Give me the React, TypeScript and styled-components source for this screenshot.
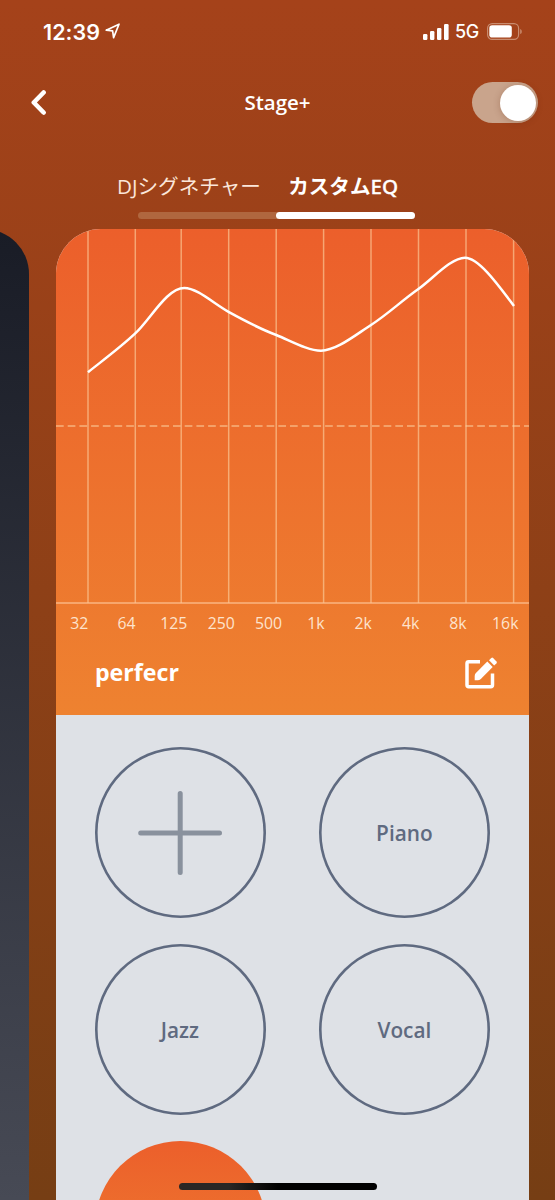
import React from 'react';
import styled, { createGlobalStyle } from 'styled-components';

const GlobalStyle = createGlobalStyle`
  * { box-sizing: border-box; }
  body { margin: 0; }
`;

const Screen = styled.div`
  position: relative;
  width: 555px;
  height: 1200px;
  overflow: hidden;
  display: flex;
  flex-direction: column;
  background: linear-gradient(#a5421a, #763e14);
  color: #fff;
  font-family: 'Open Sans', 'Noto Sans CJK JP', sans-serif;
`;

const StatusBar = styled.header`
  flex: none;
  height: 63px;
  padding: 0 32px 0 43px;
  display: flex;
  align-items: center;
  font-family: Inter, sans-serif;
`;

const Clock = styled.span`
  font-size: 21.5px;
  font-weight: 600;
  letter-spacing: 0.05px;
  width: 57px;
  white-space: nowrap;
`;

const LocationIcon = styled.svg`
  margin: 0 auto 1px 5px;
`;

const Network = styled.span`
  font-size: 18px;
  font-weight: 500;
  width: 24px;
  margin: 0 8px 0 6px;
  letter-spacing: -0.3px;
  white-space: nowrap;
`;

const Header = styled.div`
  flex: none;
  height: 79px;
  padding: 0 17px 0 30px;
  display: grid;
  grid-template-columns: 66px 1fr 66px;
  align-items: center;
`;

const BackButton = styled.button`
  border: 0;
  padding: 0;
  background: none;
  display: flex;
`;

const Title = styled.h1`
  margin: 0;
  padding: 0 13px 2px 0;
  text-align: center;
  font-size: 20.5px;
  font-weight: 600;
  line-height: 28px;
`;

const Toggle = styled.button`
  width: 66px;
  height: 41px;
  border: 0;
  border-radius: 21px;
  padding: 0 2px 0 0;
  display: flex;
  justify-content: flex-end;
  align-items: center;
  background: #c9a48c;
`;

const Knob = styled.span`
  width: 36px;
  height: 36px;
  border-radius: 50%;
  background: #fff;
  box-shadow: 0 1px 7px rgba(90, 30, 0, 0.25);
`;

const Tabs = styled.nav`
  flex: none;
  height: 87px;
  padding: 25px 0 0 117px;
`;

const TabLabels = styled.div`
  display: flex;
  height: 45px;
  padding-bottom: 8px;
  align-items: center;
`;

const Tab = styled.span<{ $active?: boolean; $width: number }>`
  width: ${p => p.$width}px;
  font-size: 20.6px;
  font-weight: ${p => (p.$active ? 700 : 400)};
  line-height: 28px;
  white-space: nowrap;
  color: ${p => (p.$active ? '#fff' : '#fbe6da')};
`;

const Latin = styled.span`
  font-family: 'Noto Sans', 'Open Sans', sans-serif;
  font-weight: 500;
  -webkit-text-stroke: 0.3px #fff;
`;

const TabTrack = styled.div`
  width: 276.5px;
  height: 7px;
  margin: 0 0 0 21.4px;
  border-radius: 4px;
  background: #b0673f;
  display: flex;
  justify-content: flex-end;
`;

const TabThumb = styled.div`
  width: 139px;
  border-radius: 4px;
  background: #fff;
`;

const Carousel = styled.main`
  flex: 1;
  min-height: 0;
  display: flex;
  gap: 26.5px;
  padding-top: 0.3px;
`;

const PreviousCard = styled.section`
  width: 29.4px;
  overflow: hidden;
  display: flex;
  justify-content: flex-end;
`;

const PreviousFace = styled.div`
  flex: none;
  width: 473px;
  border-radius: 45px 45px 0 0;
  background: linear-gradient(#191c26, #474a55);
`;

const Card = styled.section`
  width: 473px;
  border-radius: 45px 45px 0 0;
  overflow: hidden;
  background: #dee1e6;
  display: flex;
  flex-direction: column;
`;

const Equalizer = styled.div`
  flex: none;
  height: 485.5px;
  background: linear-gradient(#ec5f2b, #ee8230);
`;

const Chart = styled.svg`
  display: block;
`;

const Frequencies = styled.div`
  display: grid;
  grid-template-columns: repeat(10, 47.35px);
  height: 37px;
  margin-left: -0.4px;
  align-items: center;
  text-align: center;
  font-size: 15.8px;
  color: #fde3cd;
`;

const PresetRow = styled.div`
  height: 64px;
  padding: 0 31.4px 0 39px;
  display: flex;
  align-items: center;
  justify-content: space-between;
`;

const PresetName = styled.h2`
  margin: 0;
  padding-bottom: 2px;
  font-size: 23.2px;
  font-weight: 700;
`;

const Presets = styled.div`
  padding: 32.5px 39px 0;
  display: grid;
  grid-template-columns: 171px 171px;
  column-gap: 53.5px;
  row-gap: 26px;
`;

const Preset = styled.button<{ $selected?: boolean }>`
  width: 171px;
  height: 171px;
  padding: 0;
  border: 0;
  border-radius: 50%;
  box-shadow: ${p => (p.$selected ? 'none' : 'inset 0 0 0 2.6px #5f6a80')};
  background: ${p => (p.$selected ? 'linear-gradient(#ec5f2b, #ee8230)' : 'none')};
  color: #5f6a80;
  font: 600 20.8px 'Open Sans', sans-serif;
  display: flex;
  align-items: center;
  justify-content: center;
`;

const PresetLabel = styled.span`
  padding-right: 1px;
`;

const HomeIndicator = styled.div`
  position: absolute;
  left: 178.5px;
  bottom: 10px;
  width: 198.5px;
  height: 7px;
  border-radius: 4px;
  background: linear-gradient(90deg, #2a2725 25%, #000 50%);
`;

const bands = ['32', '64', '125', '250', '500', '1k', '2k', '4k', '8k', '16k'];
const gridLines = [32, 79.3, 125.2, 172.7, 220.2, 267.6, 315, 362.5, 410, 457.6];

export default function App() {
  return (
    <Screen>
      <GlobalStyle />
      <StatusBar>
        <Clock>12:39</Clock>
        <LocationIcon width="16" height="16" viewBox="0 0 16 16">
          <path d="M1.2 7.2 14 1.2 8.6 14.6 7.6 7.8z" fill="none" stroke="#fff" strokeWidth="1.7" strokeLinejoin="round" />
        </LocationIcon>
        <svg width="26" height="16" viewBox="0 0 26 16" fill="#fff">
          <rect x="0" y="10" width="4.4" height="6" rx="1.2" />
          <rect x="7" y="7" width="4.4" height="9" rx="1.2" />
          <rect x="14" y="4" width="4.4" height="12" rx="1.2" />
          <rect x="21" y="0" width="4.6" height="16" rx="1.2" />
        </svg>
        <Network>5G</Network>
        <svg width="36" height="17" viewBox="0 0 36 17">
          <rect x="0.6" y="0.6" width="31" height="15.8" rx="4.6" fill="none" stroke="#c98c6f" strokeWidth="1.2" />
          <rect x="2.3" y="2.3" width="22.5" height="12.2" rx="2.8" fill="#fff" />
          <path d="M33.2 5.9c2.1.8 2.1 4.4 0 5.2z" fill="#c98c6f" />
        </svg>
      </StatusBar>
      <Header>
        <BackButton aria-label="Back">
          <svg width="16" height="25" viewBox="0 0 16 25">
            <path d="M13.6 2.5 3.8 12.5 13.6 22.5" fill="none" stroke="#fff" strokeWidth="4.6" strokeLinecap="round" strokeLinejoin="round" />
          </svg>
        </BackButton>
        <Title>Stage+</Title>
        <Toggle role="switch" aria-checked="true">
          <Knob />
        </Toggle>
      </Header>
      <Tabs>
        <TabLabels>
          <Tab $width={171.2}>DJシグネチャー</Tab>
          <Tab $width={110} $active>カスタム<Latin>EQ</Latin></Tab>
        </TabLabels>
        <TabTrack>
          <TabThumb />
        </TabTrack>
      </Tabs>
      <Carousel>
        <PreviousCard>
          <PreviousFace />
        </PreviousCard>
        <Card>
          <Equalizer>
            <Chart width="473" height="375" viewBox="0 0 473 375" fill="none">
              {gridLines.map(x => (
                <line key={x} x1={x} x2={x} y1="0" y2="374" stroke="#fbd0a0" strokeOpacity="0.62" strokeWidth="1.5" />
              ))}
              <line x1="0" x2="473" y1="197" y2="197" stroke="#fbd0a0" strokeOpacity="0.7" strokeWidth="1.5" strokeDasharray="7.7 4" />
              <line x1="0" x2="473" y1="374" y2="374" stroke="#fbc090" strokeOpacity="0.85" strokeWidth="1.4" />
              <path
                d="M32 143.2C48 130.5 65 118 79.5 104.2C95 89.5 111 59 128.3 59C141 59 157 74 173 83.2C189 92 204 100 220.3 106C236 112.5 252 121.7 265 121.7C280 121.7 298 107 315 96C332 85 346 71.5 362.4 60C377 49.5 395 28.7 409 28.7C423 28.7 443 57 458 77"
                stroke="#fff"
                strokeWidth="2.5"
              />
            </Chart>
            <Frequencies>
              {bands.map(b => <span key={b}>{b}</span>)}
            </Frequencies>
            <PresetRow>
              <PresetName>perfecr</PresetName>
              <svg width="34" height="34" viewBox="0 0 34 34" fill="none">
                <path d="M16 5.8H4.7Q3 5.8 3 7.5V29Q3 30.7 4.7 30.7H26.8Q28.500 30.7 28.5 29V17.5" stroke="#fff" strokeWidth="3.5" />
                <path d="M10.7 24.3V20Q10.700 18.2 11.900 17L23.3 5.6 28.700 11 16.8 22.9Q15.3 24.3 13.8 24.3z" fill="#fff" />
                <path d="m25 4.3 2.3-2.3q.9-.8 1.8 0l3.4 3.4q.8.900 0 1.8l-2.3 2.3z" fill="#fff" />
              </svg>
            </PresetRow>
          </Equalizer>
          <Presets>
            <Preset aria-label="Add preset">
              <svg width="84" height="84" viewBox="0 0 84 84">
                <path d="M42.2 2.5V81.5M2.7 42H81.5" stroke="#89919d" strokeWidth="5" strokeLinecap="round" />
              </svg>
            </Preset>
            <Preset><PresetLabel>Piano</PresetLabel></Preset>
            <Preset><PresetLabel>Jazz</PresetLabel></Preset>
            <Preset><PresetLabel>Vocal</PresetLabel></Preset>
            <Preset $selected aria-label="perfecr" />
          </Presets>
        </Card>
      </Carousel>
      <HomeIndicator />
    </Screen>
  );
}
